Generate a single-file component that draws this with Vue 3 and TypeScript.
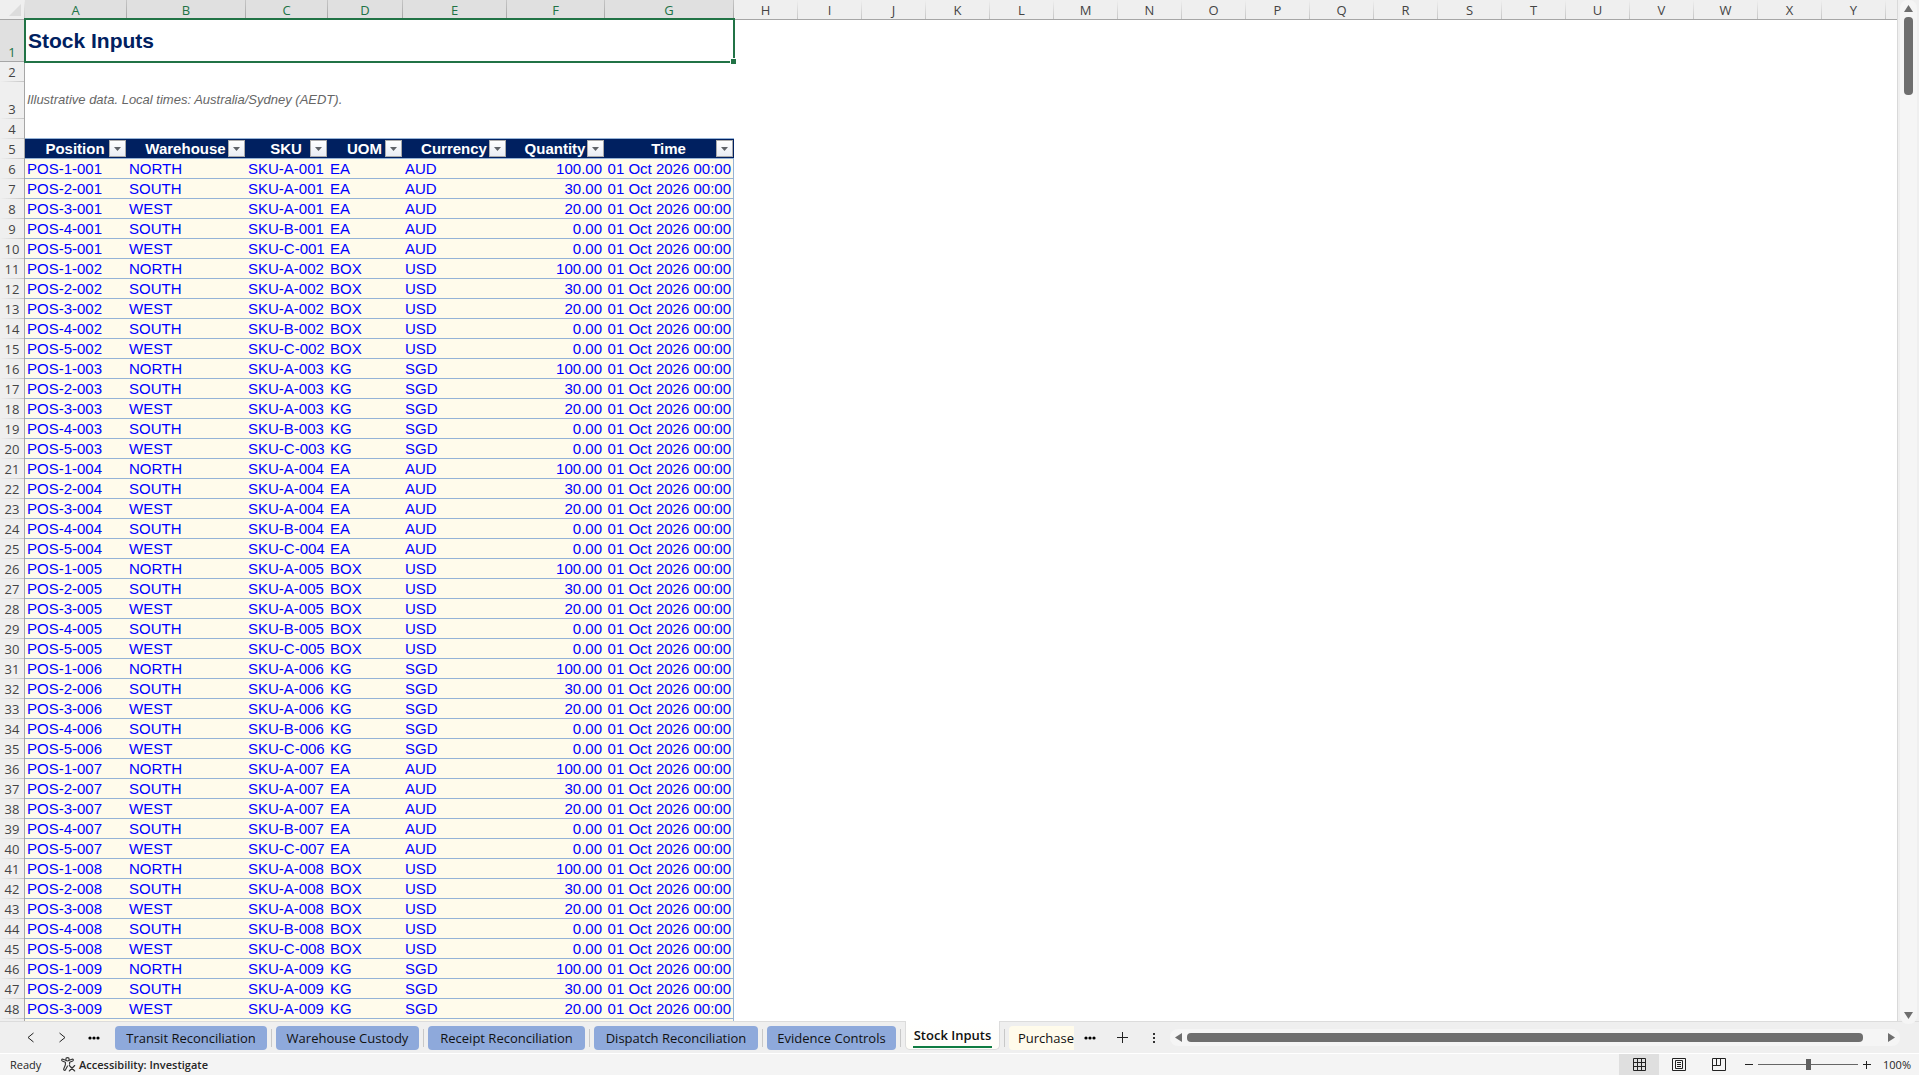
<script setup lang="ts">
import { ref } from 'vue'

interface Column { letter: string; title: string }
interface StockRow {
  num: number
  position: string
  warehouse: string
  sku: string
  uom: string
  currency: string
  quantity: string
  time: string
}

const columns: Column[] = [
  { letter: 'A', title: 'Position' },
  { letter: 'B', title: 'Warehouse' },
  { letter: 'C', title: 'SKU' },
  { letter: 'D', title: 'UOM' },
  { letter: 'E', title: 'Currency' },
  { letter: 'F', title: 'Quantity' },
  { letter: 'G', title: 'Time' },
]
const emptyLetters: string[] = 'HIJKLMNOPQRSTUVWXY'.split('')

const positions = [
  { warehouse: 'NORTH', item: 'A', quantity: 100 },
  { warehouse: 'SOUTH', item: 'A', quantity: 30 },
  { warehouse: 'WEST', item: 'A', quantity: 20 },
  { warehouse: 'SOUTH', item: 'B', quantity: 0 },
  { warehouse: 'WEST', item: 'C', quantity: 0 },
]
const units = [
  { uom: 'EA', currency: 'AUD' },
  { uom: 'BOX', currency: 'USD' },
  { uom: 'KG', currency: 'SGD' },
]

const rows: StockRow[] = Array.from({ length: 43 }, (_, i) => {
  const p = positions[i % 5]
  const batch = Math.floor(i / 5)
  const unit = units[batch % 3]
  const suffix = String(batch + 1).padStart(3, '0')
  return {
    num: i + 6,
    position: `POS-${(i % 5) + 1}-${suffix}`,
    warehouse: p.warehouse,
    sku: `SKU-${p.item}-${suffix}`,
    uom: unit.uom,
    currency: unit.currency,
    quantity: p.quantity.toFixed(2),
    time: '01 Oct 2026 00:00',
  }
})

const tabs = [
  { name: 'Transit Reconciliation', width: 152 },
  { name: 'Warehouse Custody', width: 143 },
  { name: 'Receipt Reconciliation', width: 157 },
  { name: 'Dispatch Reconciliation', width: 164 },
  { name: 'Evidence Controls', width: 129 },
]
const zoom = ref(100)
</script>

<template>
  <div class="app">
    <main class="workbook">
      <div class="sheet">
        <table class="grid">
          <colgroup>
            <col class="c-num" />
            <col v-for="c in columns" :key="c.letter" :class="'c-' + c.letter" />
            <col v-for="l in emptyLetters" :key="l" class="c-std" />
            <col />
          </colgroup>
          <thead>
            <tr class="letters">
              <th class="corner">
                <svg width="24" height="17" viewBox="0 0 24 17"><path d="M21 2v12H9z" fill="#dcdcdc" /></svg>
              </th>
              <th v-for="c in columns" :key="c.letter" class="picked" scope="col">{{ c.letter }}</th>
              <th v-for="l in emptyLetters" :key="l" scope="col">{{ l }}</th>
              <th class="rest"></th>
            </tr>
          </thead>
          <tbody>
            <tr class="r-title">
              <th class="num picked" scope="row">1</th>
              <td class="title" colspan="7">
                Stock Inputs
                <span class="selection"><span class="handle"></span></span>
              </td>
              <td colspan="19"></td>
            </tr>
            <tr>
              <th class="num" scope="row">2</th>
              <td colspan="26"></td>
            </tr>
            <tr class="r-note">
              <th class="num" scope="row">3</th>
              <td class="note" colspan="26">Illustrative data. Local times: Australia/Sydney (AEDT).</td>
            </tr>
            <tr>
              <th class="num" scope="row">4</th>
              <td class="ruled" colspan="7"></td>
              <td colspan="19"></td>
            </tr>
            <tr>
              <th class="num" scope="row">5</th>
              <th v-for="c in columns" :key="c.letter" class="head" scope="col">
                {{ c.title }}
                <button class="filter" type="button" :aria-label="'Filter ' + c.title">
                  <svg width="7" height="4" viewBox="0 0 7 4"><path d="M0 0h7L3.500 4z" fill="#5f6368" /></svg>
                </button>
              </th>
              <td colspan="19"></td>
            </tr>
            <tr v-for="r in rows" :key="r.num" class="data">
              <th class="num" scope="row">{{ r.num }}</th>
              <td>{{ r.position }}</td>
              <td>{{ r.warehouse }}</td>
              <td>{{ r.sku }}</td>
              <td>{{ r.uom }}</td>
              <td>{{ r.currency }}</td>
              <td class="right">{{ r.quantity }}</td>
              <td class="right last">{{ r.time }}</td>
              <td class="blank" colspan="19"></td>
            </tr>
            <tr class="data">
              <th class="num" scope="row"></th>
              <td class="last" colspan="7"></td>
              <td class="blank" colspan="19"></td>
            </tr>
          </tbody>
        </table>
      </div>

      <div class="vscroll">
        <svg width="9" height="7" viewBox="0 0 9 7"><path d="M4.500 0 9 7H0z" /></svg>
        <div class="vthumb"></div>
        <svg width="9" height="7" viewBox="0 0 9 7"><path d="M4.500 7 9 0H0z" /></svg>
      </div>

      <nav class="tabbar">
        <div class="steps">
          <button type="button" aria-label="Previous sheet">
            <svg width="9" height="11" viewBox="0 0 9 11"><path d="M7.500 1 2 5.500l5.500 4.500" class="line" /></svg>
          </button>
          <button type="button" aria-label="Next sheet">
            <svg width="9" height="11" viewBox="0 0 9 11"><path d="M1.500 1 7 5.500 1.500 10" class="line" /></svg>
          </button>
          <button type="button" aria-label="More sheets to the left">
            <svg width="12" height="4" viewBox="0 0 12 4"><circle cx="2" cy="2" r="1.600" /><circle cx="6" cy="2" r="1.600" /><circle cx="10" cy="2" r="1.600" /></svg>
          </button>
        </div>
        <template v-for="t in tabs" :key="t.name">
          <button class="tab" type="button" :style="{ width: t.width + 'px' }">{{ t.name }}</button>
          <span class="sep"></span>
        </template>
        <button class="tab active" type="button"><span>Stock Inputs</span></button>
        <span class="sep"></span>
        <button class="tab cut" type="button">Purchase</button>
        <div class="extras">
          <button type="button" aria-label="More sheets to the right">
            <svg width="12" height="4" viewBox="0 0 12 4"><circle cx="2" cy="2" r="1.600" /><circle cx="6" cy="2" r="1.600" /><circle cx="10" cy="2" r="1.600" /></svg>
          </button>
          <button type="button" aria-label="New sheet">
            <svg width="11" height="11" viewBox="0 0 11 11"><path d="M5.500 0v11M0 5.500h11" class="line" /></svg>
          </button>
          <button type="button" aria-label="Resize tab area">
            <svg width="2" height="10" viewBox="0 0 2 10"><path d="M0 0h2v2H0zM0 4h2v2H0zM0 8h2v2H0z" fill="#333" /></svg>
          </button>
        </div>
        <div class="hscroll">
          <svg width="7" height="9" viewBox="0 0 7 9"><path d="M0 4.500 7 0v9z" /></svg>
          <div class="hthumb"></div>
          <svg width="7" height="9" viewBox="0 0 7 9"><path d="M7 4.500 0 0v9z" /></svg>
        </div>
      </nav>
    </main>

    <footer class="status">
      <span class="ready">Ready</span>
      <button class="access" type="button">
        <svg width="15" height="15" viewBox="0 0 15 15">
          <g fill="none" stroke="#333" stroke-width="1.100" stroke-linecap="round" stroke-linejoin="round">
            <circle cx="6.500" cy="2.300" r="1.700" />
            <path d="M4.800 3.300 2 2.200C.6 1.800.2 3.400 1.300 3.900L4.400 5.200v2.600L2.700 12c-.3 1.400 1.300 1.900 1.800.8L6.500 9M8.200 3.300 11 2.200c1.400-.4 1.800 1.200.7 1.700L8.600 5.200v2" />
            <path d="M8.300 8.500 13.700 14M13.700 8.500 8.300 14" />
          </g>
        </svg>
        Accessibility: Investigate
      </button>
      <div class="views">
        <button class="on" type="button" aria-label="Normal">
          <svg width="13" height="13" viewBox="0 0 13 13"><path d="M.5.5h12v12H.5zM4.500.5v12M8.500.5v12M.5 4.500h12M.5 8.500h12" class="line" /></svg>
        </button>
        <button type="button" aria-label="Page layout">
          <svg width="14" height="13" viewBox="0 0 14 13"><path d="M.5.5h13v12H.5zM3.500 2.500h7v8h-7zM5 4.500h4M5 6.500h4M5 8.500h4" class="line" /></svg>
        </button>
        <button type="button" aria-label="Page break preview">
          <svg width="14" height="13" viewBox="0 0 14 13"><path d="M.5.5h13v12H.5zM4.500.5v7M8.500.5v7M.5 7.500h8" class="line" /></svg>
        </button>
      </div>
      <button class="sign" type="button" aria-label="Zoom out">
        <svg width="8" height="8" viewBox="0 0 8 8"><path d="M0 3.500h8" class="line" /></svg>
      </button>
      <input v-model="zoom" class="zoom" type="range" min="10" max="190" aria-label="Zoom" />
      <button class="sign" type="button" aria-label="Zoom in">
        <svg width="8" height="8" viewBox="0 0 8 8"><path d="M0 3.500h8M3.500 0v8" class="line" /></svg>
      </button>
      <span class="percent">{{ zoom }}%</span>
    </footer>
  </div>
</template>

<style>
body {
  margin: 0;
  overflow: hidden;
}
</style>

<style scoped>
.app {
  display: flex;
  flex-direction: column;
  height: 100vh;
  background: #efefef;
  font-family: "Open Sans", "Noto Sans", sans-serif;
  color: #262626;
}
.app * {
  box-sizing: border-box;
}
button {
  margin: 0;
  padding: 0;
  border: 0;
  background: none;
  color: inherit;
  font: inherit;
}
svg {
  display: block;
  flex: none;
}
.line {
  fill: none;
  stroke: #222;
  stroke-width: 1;
}
.workbook {
  flex: 1;
  min-height: 0;
  display: grid;
  grid-template-columns: minmax(0, 1fr) 21px;
  grid-template-rows: minmax(0, 1fr) 32px;
}
.sheet {
  grid-area: 1 / 1;
  overflow: hidden;
  background: #fff;
  border-right: 1px solid #d9d9d9;
}

/* Spreadsheet grid */
.grid {
  width: 100%;
  table-layout: fixed;
  border-collapse: separate;
  border-spacing: 0;
  font-family: "Liberation Sans", Arial, sans-serif;
  font-size: 15px;
  line-height: 19px;
}
.c-num { width: 25px; }
.c-A { width: 102px; }
.c-B { width: 119px; }
.c-C { width: 82px; }
.c-D { width: 75px; }
.c-E { width: 104px; }
.c-F { width: 98px; }
.c-G { width: 129px; }
.c-std { width: 64px; }
.grid th,
.grid td {
  height: 20px;
  padding: 0 2px;
  white-space: nowrap;
  text-align: left;
}
.grid .letters th {
  padding: 2px 1px 0 0;
  border-bottom: 1px solid #a6a6a6;
  background: linear-gradient(#efefef, #c6c6c6) right / 1px 100% no-repeat #efefef;
  color: #444;
  font: 13px/17px "Open Sans", "Noto Sans", sans-serif;
  text-align: center;
}
.grid .letters .picked {
  background: linear-gradient(#c6c6c6, #a6a6a6) right / 1px 100% no-repeat #e0e0e0;
  color: #217346;
}
.grid .letters .rest {
  background: #efefef;
}
.grid .num {
  padding: 0;
  border-right: 1px solid #a6a6a6;
  background: linear-gradient(90deg, #efefef, #c6c6c6) bottom / 100% 1px no-repeat #efefef;
  color: #444;
  font: 13px/20px "Open Sans", "Noto Sans", sans-serif;
  text-align: center;
  vertical-align: bottom;
}
.grid .num.picked {
  background: linear-gradient(#a6a6a6, #a6a6a6) bottom / 100% 1px no-repeat #e0e0e0;
  color: #217346;
}
.grid .r-title td,
.grid .r-title th {
  height: 42px;
}
.grid .r-note td,
.grid .r-note th {
  height: 37px;
}
.grid .title {
  position: relative;
  padding: 0 3px 2px;
  color: #002060;
  font-size: 21px;
  font-weight: 700;
}
.selection {
  position: absolute;
  inset: -2px -1px -1px;
  border: 2px solid #217346;
}
.handle {
  position: absolute;
  right: -4px;
  bottom: -4px;
  width: 7px;
  height: 7px;
  border: 1px solid #fff;
  background: #217346;
}
.grid .note {
  padding-bottom: 2px;
  color: #666;
  font-size: 13px;
  font-style: italic;
}
.grid .ruled {
  border-bottom: 1px solid #95b3d7;
}
.grid .head {
  position: relative;
  padding-right: 4px;
  border-bottom: 1px solid #95b3d7;
  background: #002060;
  color: #fff;
  text-align: center;
}
.filter {
  position: absolute;
  right: 1px;
  bottom: 1px;
  display: grid;
  place-items: center;
  width: 17px;
  height: 17px;
  border: 1px solid #ababab;
  background: linear-gradient(#fff, #e9edf4);
}
.grid .data td {
  border-bottom: 1px solid #95b3d7;
  background: #fffbeb;
  color: #0000ff;
}
.grid .data .right {
  padding-right: 3px;
  text-align: right;
}
.grid .data .last {
  padding-right: 2px;
  border-right: 1px solid #95b3d7;
}
.grid .data .blank {
  border: 0;
  background: #fff;
}

/* Scroll bars */
.vscroll {
  grid-area: 1 / 2 / 3 / 3;
  z-index: 1;
  display: flex;
  flex-direction: column;
  align-items: center;
  gap: 5px;
  margin: 0 2px 29px;
  padding: 5px 0;
  border-radius: 8px;
  background: #f5f5f5;
  fill: #6e6e6e;
}
.vthumb {
  width: 9px;
  height: 78px;
  margin-bottom: auto;
  border-radius: 4px;
  background: #6e6e6e;
}
.hscroll {
  flex: 1;
  display: flex;
  align-items: center;
  gap: 5px;
  height: 17px;
  padding: 0 5px;
  border-radius: 8px;
  background: #f5f5f5;
  fill: #6e6e6e;
}
.hthumb {
  flex: 1;
  height: 9px;
  margin-right: 20px;
  border-radius: 4px;
  background: #6e6e6e;
}

/* Sheet tabs */
.tabbar {
  grid-area: 2 / 1 / 3 / 3;
  display: flex;
  align-items: center;
  padding-right: 19px;
  border-top: 1px solid #dcdcdc;
  font-size: 13px;
}
.steps {
  display: flex;
  width: 115px;
  padding-left: 14px;
}
.steps button,
.extras button {
  display: grid;
  place-items: center;
  width: 32px;
  height: 24px;
}
.tab {
  height: 24px;
  border-radius: 4px;
  background: #8ea9db;
  color: #111;
  line-height: 24px;
  white-space: nowrap;
}
.sep {
  width: 1px;
  height: 18px;
  margin: 0 4px;
  background: #c8c8c8;
}
.tab.active {
  align-self: flex-start;
  width: 95px;
  height: 29px;
  margin-top: -1px;
  padding: 2px 7px 0;
  border: 1px solid #dcdcdc;
  border-top: 0;
  border-radius: 0 0 5px 5px;
  background: linear-gradient(#fff, #fffef8);
  font-weight: 600;
}
.tab.active span {
  display: block;
  height: 23px;
  border-bottom: 2px solid #107c41;
  line-height: 21px;
}
.tab.cut {
  width: 65px;
  padding-left: 9px;
  overflow: hidden;
  border-radius: 4px 0 0 4px;
  background: #fffbeb;
  text-align: left;
}
.extras {
  display: flex;
  width: 96px;
}

/* Status bar */
.status {
  display: flex;
  align-items: center;
  height: 22px;
  padding: 0 8px 0 10px;
  border-top: 1px solid #fff;
  background: #f4f4f4;
  font-size: 11px;
}
.ready {
  width: 51px;
}
.access {
  display: flex;
  align-items: center;
  gap: 3px;
  font-weight: 600;
}
.views {
  display: flex;
  align-self: stretch;
  margin-right: 1px;
  margin-left: auto;
}
.views button {
  display: grid;
  place-items: center;
  width: 40px;
}
.views .on {
  background: #dfdfdf;
}
.sign {
  display: grid;
  place-items: center;
  width: 18px;
  height: 20px;
}
.zoom {
  width: 100px;
  height: 20px;
  margin: 0;
  appearance: none;
  background: linear-gradient(#666, #666) center / 100% 1px no-repeat;
}
.zoom::-webkit-slider-thumb {
  appearance: none;
  width: 5px;
  height: 11px;
  background: #5f5f5f;
}
.percent {
  width: 35px;
  text-align: right;
}
</style>
